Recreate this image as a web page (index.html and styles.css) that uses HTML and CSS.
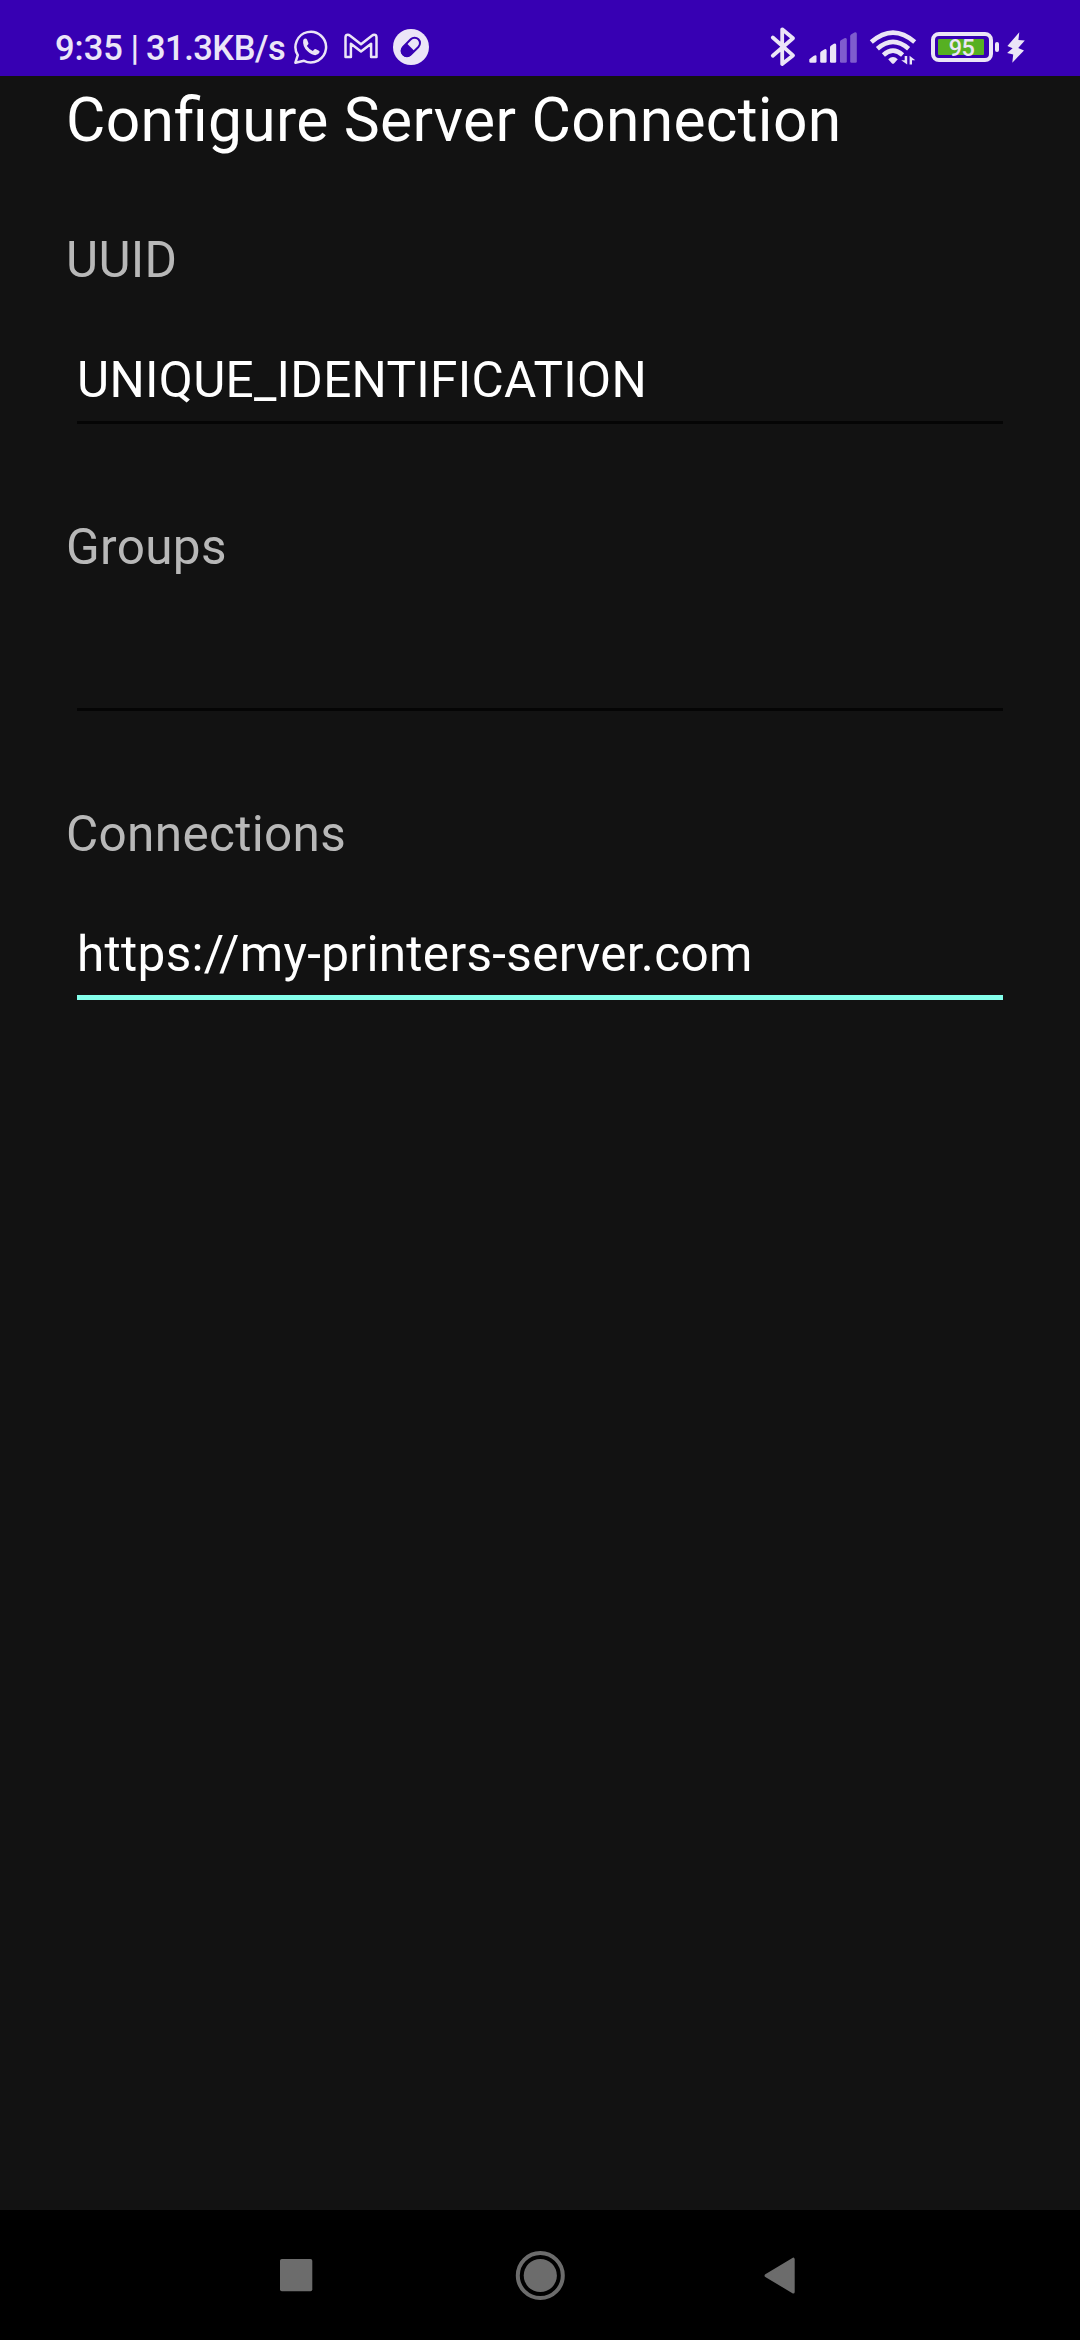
FILE: index.html
```html
<!DOCTYPE html>
<html lang="en">
<head>
<meta charset="utf-8">
<title>Configure Server Connection</title>
<link rel="stylesheet" href="styles.css">
</head>
<body>
<div class="screen">
  <header class="status-bar">
    <div class="status-left">
      <span class="status-text">9:35<span class="status-speed"> | 31.3KB/s</span></span>
      <svg class="icon icon-chat" width="36" height="76" viewBox="293 0 36 76">
        <path d="M297.8 55.2A15.3 15.3 0 1 1 304 60.8L295.4 62.7Z" fill="none" stroke="currentColor" stroke-width="2.5" stroke-linejoin="round"/>
        <path d="M303.2 40.2Q303.6 38.6 305.2 38.5Q306.6 38.5 307 39.6L308.4 43Q308.7 44 307.8 44.8L306.9 45.9Q309.3 49.6 312.8 50.9L314.5 49.3Q315.2 48.8 316 49.2L319 50.7Q319.9 51.2 319.5 52.3Q318.5 55.1 315.2 55.3Q311.4 55.1 307.3 51.1Q302.3 46 303.2 40.2Z" fill="currentColor"/>
      </svg>
      <svg class="icon icon-mail" width="36" height="76" viewBox="343 0 36 76">
        <path d="M345.5 37V57H350.9V43.8L361 51.5L371.1 43.8V57H376.5V37Q376.3 34.8 374.2 34.8Q373 34.8 372.2 35.6L361 44.2L349.8 35.6Q349 34.8 347.8 34.8Q345.7 34.8 345.5 37Z" fill="none" stroke="currentColor" stroke-width="2.5" stroke-linejoin="round"/>
      </svg>
      <svg class="icon icon-pill" width="36" height="76" viewBox="393 0 36 76">
        <circle cx="411" cy="47" r="18" fill="currentColor"/>
        <g transform="rotate(-45 410.7 47)">
          <rect x="400" y="41.6" width="21.6" height="10.8" rx="5.4" fill="none" stroke="#3700b3" stroke-width="2"/>
          <path d="M410.5 41.2H405Q399.3 41.7 399.3 47T405 52.8H410.5Z" fill="#3700b3"/>
        </g>
      </svg>
    </div>
    <div class="status-right">
      <svg class="icon" width="28" height="76" viewBox="769 0 28 76">
        <path d="M772.8 37.5L793 55.4L782.2 64V29.3L793 38.2L772.8 55.8" fill="none" stroke="currentColor" stroke-width="3.8" stroke-linejoin="round" stroke-linecap="round"/>
      </svg>
      <svg class="icon icon-signal" width="49" height="76" viewBox="809 0 49 76">
        <g fill="currentColor">
          <path d="M809.3 59.2L813.5 56Q816.5 54 816.5 56.6V61.5Q816.5 62.8 815.2 62.8H810.6Q809.3 62.8 809.3 61.5Z"/>
          <path d="M820.2 53Q820.2 52 821 51.4L824.2 49.4Q826.6 48.4 826.6 50.6V61.5Q826.6 62.8 825.3 62.8H821.5Q820.2 62.8 820.2 61.5Z"/>
          <path d="M830 47.3Q830 46.3 830.8 45.7L833.8 43.8Q836.2 42.8 836.2 45V61.5Q836.2 62.8 834.9 62.8H831.3Q830 62.8 830 61.5Z"/>
          <g opacity=".4">
            <path d="M840 41.8Q840 40.8 840.8 40.2L844.4 38.2Q846.8 37.2 846.8 39.4V61.5Q846.8 62.8 845.5 62.8H841.3Q840 62.8 840 61.5Z"/>
            <path d="M850.2 36.2Q850.2 35.2 851 34.6L854.4 32.5Q856.8 31.5 856.8 33.7V61.5Q856.8 62.8 855.5 62.8H851.5Q850.2 62.8 850.2 61.5Z"/>
          </g>
        </g>
      </svg>
      <svg class="icon icon-wifi" width="48" height="76" viewBox="869 0 48 76">
        <g fill="none" stroke="currentColor" stroke-width="4.6">
          <path d="M871.3 42.1Q893 23.2 914.7 42.1"/>
          <path d="M877.4 48.7Q893 35 908.6 48.7"/>
          <path d="M883.4 55Q893 46.4 902.6 55"/>
        </g>
        <path d="M888.2 59.2Q893 55 897.8 59.2L894.2 63.2Q893 64.5 891.8 63.2Z" fill="currentColor"/>
        <path d="M907.2 56V64.6L901.2 60.3H904.7V56ZM909.6 64.6V55.7L915.3 60.3H912V64.6Z" fill="currentColor"/>
      </svg>
      <div class="battery">
        <div class="battery-body"><span class="battery-level">95</span></div>
        <div class="battery-tip"></div>
      </div>
      <svg class="icon icon-bolt" width="20" height="76" viewBox="1006 0 20 76">
        <path d="M1019.3 32.2L1007.4 45.9L1012.6 48.3L1007.1 52.9L1013.2 54.4L1012.3 62.7L1024 50.4L1018.2 48L1024.8 40.6L1018.4 40.1Z" fill="currentColor"/>
      </svg>
    </div>
  </header>
  <main class="content">
    <h1 class="title">Configure Server Connection</h1>
    <div class="field">
      <label class="label" for="uuid">UUID</label>
      <input class="input" id="uuid" type="text" value="UNIQUE_IDENTIFICATION" spellcheck="false">
    </div>
    <div class="field">
      <label class="label" for="groups">Groups</label>
      <input class="input" id="groups" type="text" value="">
    </div>
    <div class="field">
      <label class="label" for="connections">Connections</label>
      <input class="input input-active" id="connections" type="text" value="https://my-printers-server.com" spellcheck="false">
    </div>
  </main>
  <nav class="nav-bar">
    <svg width="50" height="50" viewBox="0 0 50 50"><rect x="9" y="9" width="32.3" height="32.3" rx="1.8" fill="currentColor"/></svg>
    <svg width="50" height="50" viewBox="0 0 50 50"><circle cx="25.3" cy="25.5" r="22.5" fill="none" stroke="currentColor" stroke-width="4"/><circle cx="25.3" cy="25.5" r="16.6" fill="currentColor"/></svg>
    <svg width="50" height="50" viewBox="0 0 50 50"><path d="M7.1 25.6L34.2 9.2V42Z" fill="currentColor" stroke="currentColor" stroke-width="3" stroke-linejoin="round"/></svg>
  </nav>
</div>
</body>
</html>
```
FILE: styles.css
```css
* {
  box-sizing: border-box;
}

body {
  margin: 0;
  background: #121212;
  font-family: Roboto, sans-serif;
}

.screen {
  display: flex;
  flex-direction: column;
  width: 1080px;
  height: 2340px;
  background: #121212;
}

.status-bar {
  display: flex;
  flex: none;
  justify-content: space-between;
  height: 76px;
  padding: 0 54px 0 55px;
  background: #3700b3;
  color: #ebe5f7;
}

.status-left,
.status-right {
  display: flex;
}

.icon {
  display: block;
  flex: none;
}

.status-text {
  width: 238px;
  padding-top: 28px;
  font-size: 34.5px;
  font-weight: 500;
  line-height: 40px;
  white-space: nowrap;
}

.status-speed {
  letter-spacing: -0.5px;
  word-spacing: -0.6px;
}

.icon-mail,
.icon-pill {
  margin-left: 14px;
}

.icon-signal {
  margin-left: 12px;
}

.icon-wifi {
  margin-left: 11px;
}

.battery {
  display: flex;
  align-items: center;
  gap: 2px;
  height: 30px;
  margin: 32px 7px 0 14px;
}

.battery-body {
  display: flex;
  width: 62px;
  height: 30px;
  padding: 3px;
  border: 4px solid currentColor;
  border-radius: 8px;
}

.battery-level {
  width: 46px;
  height: 16px;
  padding-left: 1px;
  border-radius: 1px;
  background: #56b022;
  font-size: 23.5px;
  font-weight: 500;
  letter-spacing: -0.7px;
  line-height: 18px;
  text-align: center;
}

.battery-tip {
  width: 4px;
  height: 10px;
  border-radius: 2px;
  background: currentColor;
}

.content {
  flex: 1;
  padding: 9px 66px 0;
}

.title {
  height: 71px;
  margin: 0 0 75px;
  color: #fff;
  font-size: 60.5px;
  font-weight: 400;
  font-feature-settings: "liga" 1;
  letter-spacing: 0.3px;
  line-height: 71px;
}

.field {
  display: flex;
  flex-direction: column;
  height: 287px;
}

.label {
  height: 58px;
  color: #b8b8b8;
  font-size: 49.5px;
  letter-spacing: 0.32px;
  line-height: 58px;
}

.input {
  height: 73px;
  margin: 62px 11px 0;
  padding: 0 0 12px;
  border: 0;
  border-bottom: 3px solid #050505;
  border-radius: 0;
  outline: 0;
  background: transparent;
  color: #fff;
  font: 400 49.5px/58px Roboto, sans-serif;
  letter-spacing: 0.3px;
}

.input-active {
  height: 75px;
  border-bottom: 5px solid #84ffeb;
}

.nav-bar {
  display: flex;
  flex: none;
  align-items: center;
  justify-content: space-between;
  height: 130px;
  padding: 0 271px;
  background: #000;
  color: #6c6c6c;
}
```
